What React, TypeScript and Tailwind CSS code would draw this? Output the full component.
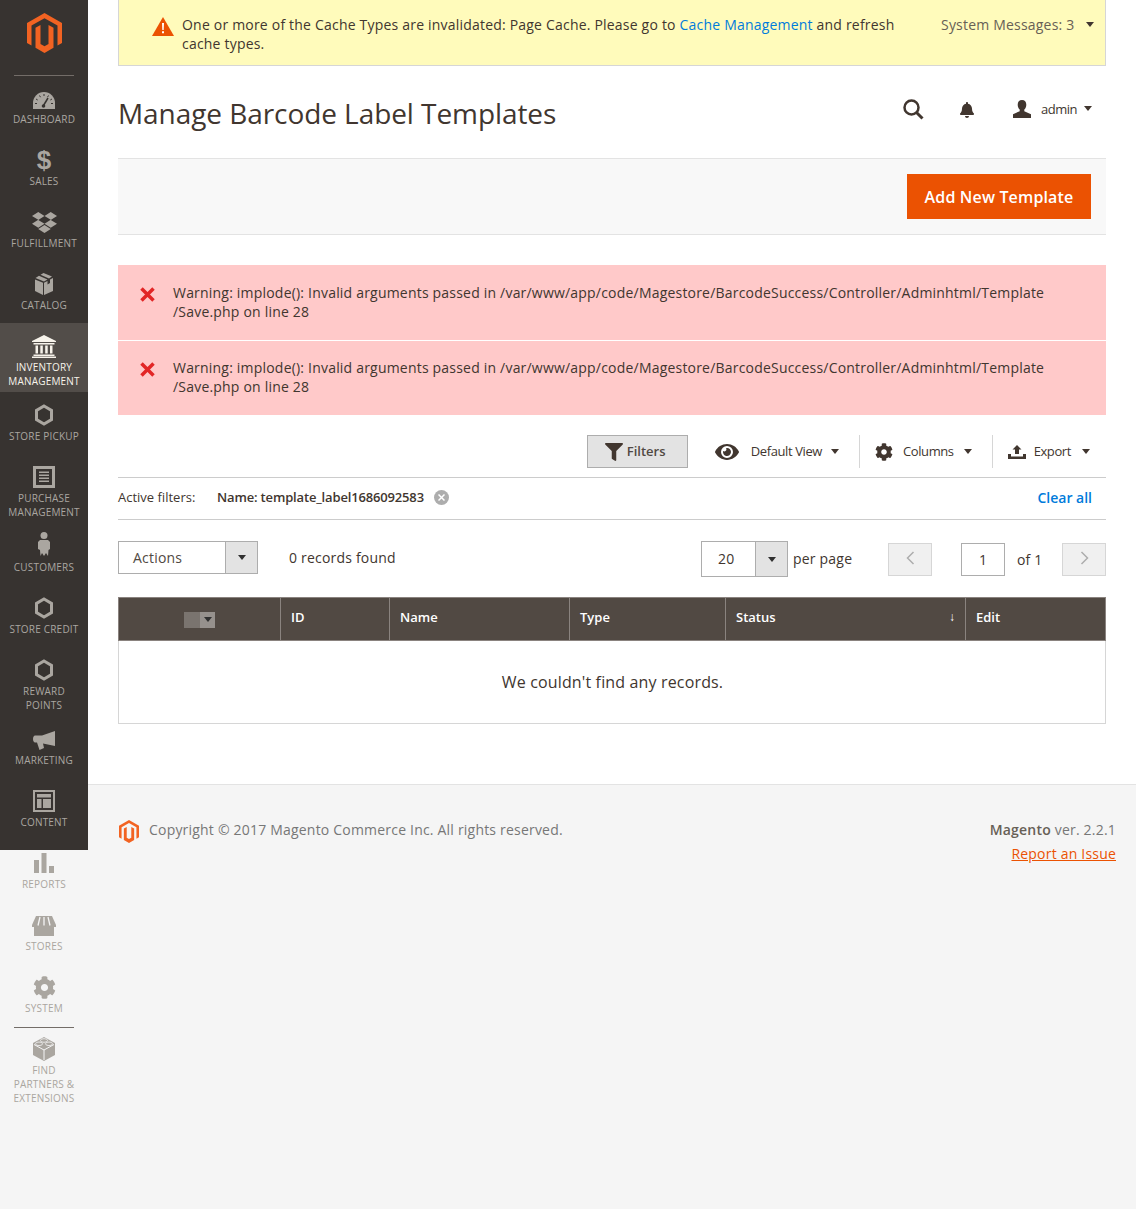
import React from 'react';
import { FaBell, FaCog, FaDropbox, FaEye, FaFilter } from 'react-icons/fa';

const Hexagon = () => (
  <svg width="20" height="22" viewBox="0 0 20 22" fill="none" stroke="currentColor" strokeWidth="3">
    <path d="M10 2l7.500 4.400v9.200L10 20l-7.500-4.400V6.400z" />
  </svg>
);

const MagentoLogo = ({ className }: { className: string }) => (
  <svg className={className} viewBox="0 0 35 40" fill="#f26322">
    <path d="M17.500 0L35 10v20l-4.500 2.600V12.600l-13-7.400-13 7.400v20L0 30V10z" />
    <path d="M13.500 12v19l4 2.300 4-2.300V12l5 2.800v20L17.500 40l-9-5.200v-20z" />
  </svg>
);

const Caret = ({ className = 'border-t-[#303030]' }: { className?: string }) => (
  <span className={`inline-block w-0 h-0 border-x-[4px] border-x-transparent border-t-[5px] ${className}`} />
);

const navIcons: Record<string, React.ReactNode> = {
  dashboard: (
    <svg width="22" height="17" viewBox="0 0 22 17" className="mt-[5px]">
      <path d="M0 17v-6a11 11 0 0122 0v6z" fill="currentColor" />
      <path
        d="M11 2v2M6.500 3.500l1 1.700M3 7l1.700 1M2 11.500h2M15.500 3.500l-1 1.700M19 7l-1.700 1M20 11.500h-2"
        stroke="#373330"
        strokeWidth="1"
      />
      <path d="M15 6l-4.500 7.500" stroke="#373330" strokeWidth="1.500" />
      <circle cx="10.500" cy="14" r="1.800" fill="#373330" />
    </svg>
  ),
  sales: <span className="text-[26px] leading-[24px] font-bold font-['Liberation_Sans',sans-serif]">$</span>,
  fulfillment: <FaDropbox size={25} />,
  catalog: (
    <svg width="20" height="22" viewBox="0 0 20 22" fill="currentColor">
      <path d="M9.500 0L18 3.500l-3 2-8.500-3.700zM5 2.800l8.500 3.800L10 8.500 1.500 5zM1 6.500l8 3.300V22l-8-4zM19 5v13l-9 4V9.800l3.500-1.800v3.500l2.500-1.500V6.500z" />
    </svg>
  ),
  inventory: (
    <svg width="24" height="23" viewBox="0 0 24 23" fill="currentColor">
      <path d="M12 0l12 6v1H0V6zM1.500 8h21v1.500h-21zM3.500 10.500h2.500v8H3.500zM8.300 10.500h2.500v8H8.300zM13.200 10.500h2.500v8h-2.500zM18 10.500h2.500v8H18zM1.500 19.500h21V21h-21zM0 21.500h24V23H0z" />
    </svg>
  ),
  pickup: <Hexagon />,
  purchase: (
    <svg width="22" height="22" viewBox="0 0 22 22" fill="currentColor">
      <path fillRule="evenodd" d="M0 0h22v22H0zM3 3v16h16V3z" />
      <path d="M6 5.500h10V7H6zM6 8.500h10V10H6zM6 11.500h10V13H6zM6 14.500h10V16H6z" />
    </svg>
  ),
  customers: (
    <svg width="12" height="24" viewBox="0 0 12 24" fill="currentColor" className="mb-[4px]">
      <circle cx="6" cy="3.500" r="3.500" />
      <path d="M2 8h8l2 2v7l-1.500 1-.5 6-2-3-2 3-2-3-1.500 3L2 18l-2-1v-7z" />
    </svg>
  ),
  credit: <Hexagon />,
  reward: <Hexagon />,
  marketing: (
    <svg width="22" height="19" viewBox="0 0 22 19" fill="currentColor" className="mt-[2px]">
      <path d="M22 0v15L10 12.500 11 17l-4.500 2L4 11.500H2c-1 0-2-1.500-2-3.500s1-3.500 2-3.500h7z" />
    </svg>
  ),
  content: (
    <svg width="22" height="22" viewBox="0 0 22 22" fill="currentColor">
      <path fillRule="evenodd" d="M0 0h22v22H0zM2 2v18h18V2z" />
      <path d="M4 4h14v3.500H4zM4 9h4.500v9H4zM10 9h8v9h-8z" />
    </svg>
  ),
  reports: (
    <svg width="20" height="22" viewBox="0 0 20 22" fill="currentColor" className="mt-[2px]">
      <path d="M0 7h5v13H0zM7.500 0h5v20h-5zM15 13h5v7h-5z" />
    </svg>
  ),
  stores: (
    <svg width="24" height="20" viewBox="0 0 24 20" className="mt-[2px]">
      <path d="M4 0h16l4 9v2H0V9z" fill="currentColor" />
      <path d="M2 11h20v9H2z" fill="currentColor" />
      <path d="M8 1L6 9.500M12 1v8.500M16 1l2 8.500" stroke="#f5f5f5" strokeWidth="1.300" fill="none" />
    </svg>
  ),
  system: <FaCog size={23} />,
  partners: (
    <svg width="22" height="24" viewBox="0 0 22 24">
      <path d="M11 0l11 6v12l-11 6L0 18V6z" fill="currentColor" />
      <path d="M1 7.500l10 5.500 10-5.500M11 13v10" stroke="#f5f5f5" strokeWidth="1" fill="none" />
      <ellipse cx="11" cy="3.500" rx="3.500" ry="1.800" fill="none" stroke="#f5f5f5" strokeWidth=".8" />
      <ellipse cx="6" cy="6.800" rx="3.500" ry="1.800" fill="none" stroke="#f5f5f5" strokeWidth=".8" />
      <ellipse cx="16" cy="6.800" rx="3.500" ry="1.800" fill="none" stroke="#f5f5f5" strokeWidth=".8" />
    </svg>
  ),
};

const NavItem = ({
  icon,
  lines,
  className = '',
}: {
  icon: string;
  lines: string[];
  className?: string;
}) => (
  <a className={`flex flex-col items-center text-center ${className}`}>
    <span className="flex h-[24px] mb-[2px] items-center justify-center">{navIcons[icon]}</span>
    {lines.map((line) => (
      <span key={line} className="text-[10px] leading-[14px] tracking-[0.2px] whitespace-nowrap">
        {line}
      </span>
    ))}
  </a>
);

const Sidebar = () => (
  <aside className="w-[88px] shrink-0">
    <div className="h-[850px] bg-[#373330] text-[#aaa6a0]">
      <div className="h-[76px] mx-[14px] border-b border-[#736d68] flex justify-center pt-[13px]">
        <MagentoLogo className="w-[35px] h-[40px]" />
      </div>
      <div className="-mt-px">
        <NavItem icon="dashboard" lines={['DASHBOARD']} className="h-[62px] pt-[11px]" />
        <NavItem icon="sales" lines={['SALES']} className="h-[62px] pt-[11px]" />
        <NavItem icon="fulfillment" lines={['FULFILLMENT']} className="h-[62px] pt-[11px]" />
        <NavItem icon="catalog" lines={['CATALOG']} className="h-[62px] pt-[11px]" />
        <NavItem
          icon="inventory"
          lines={['INVENTORY', 'MANAGEMENT']}
          className="h-[69px] pt-[11px] bg-[#524d49] text-[#f7f3eb]"
        />
        <NavItem icon="pickup" lines={['STORE PICKUP']} className="h-[62px] pt-[11px]" />
        <NavItem icon="purchase" lines={['PURCHASE', 'MANAGEMENT']} className="h-[69px] pt-[11px]" />
        <NavItem icon="customers" lines={['CUSTOMERS']} className="h-[62px] pt-[11px]" />
        <NavItem icon="credit" lines={['STORE CREDIT']} className="h-[62px] pt-[11px]" />
        <NavItem icon="reward" lines={['REWARD', 'POINTS']} className="h-[69px] pt-[11px]" />
        <NavItem icon="marketing" lines={['MARKETING']} className="h-[62px] pt-[11px]" />
        <NavItem icon="content" lines={['CONTENT']} className="h-[62px] pt-[11px]" />
      </div>
    </div>
    <div className="text-[#aaa6a0]">
      <NavItem icon="reports" lines={['REPORTS']} className="h-[52px] pt-px" />
      <NavItem icon="stores" lines={['STORES']} className="h-[62px] pt-[11px]" />
      <NavItem icon="system" lines={['SYSTEM']} className="h-[62px] pt-[11px]" />
      <div className="h-px mt-px mx-[14px] bg-[#736d68]" />
      <NavItem icon="partners" lines={['FIND', 'PARTNERS &', 'EXTENSIONS']} className="pt-[9px]" />
    </div>
  </aside>
);

const SystemMessage = () => (
  <div className="flex h-[66px] bg-[#fffbbb] border-x border-b border-[#d6d6d6] text-[14px] leading-[19px] tracking-[0.2px] text-[#41362f]">
    <div className="w-[63px] shrink-0 pl-[33px] pt-[17px]">
      <svg width="22" height="19" viewBox="0 0 22 19">
        <path d="M11 0l11 19H0z" fill="#eb5202" />
        <path d="M10 6h2l-.3 7h-1.400zM10 14.300h2v2h-2z" fill="#fff" />
      </svg>
    </div>
    <p className="w-[734px] pt-[15px]">
      One or more of the Cache Types are invalidated: Page Cache. Please go to{' '}
      <a className="text-[#007bdb]">Cache Management</a> and refresh cache types.
    </p>
    <div className="ml-[25px] pt-[15px] flex items-start gap-[12px] text-[#676056] whitespace-nowrap">
      System Messages: 3
      <Caret className="mt-[7px] border-t-[#41362f]" />
    </div>
  </div>
);

const PageHeader = () => (
  <div className="flex items-center justify-between h-[92px] pr-[14px] text-[#41362f]">
    <h1 className="text-[28px] leading-[36px] mt-[2px] tracking-[-0.07px]">Manage Barcode Label Templates</h1>
    <div className="flex items-center mb-[5px]">
      <svg width="21" height="21" viewBox="0 0 21 21" fill="none" stroke="currentColor">
        <circle cx="8.500" cy="8.500" r="7" strokeWidth="2.500" />
        <path d="M13.500 13.500l6 6" strokeWidth="3" />
      </svg>
      <FaBell size={16} className="ml-[35px]" />
      <svg width="18" height="18" viewBox="0 0 18 18" fill="currentColor" className="ml-[38px] mb-[2px]">
        <path d="M9 0c2.800 0 4.300 2 4.300 4.800 0 2-.8 3.800-2 4.800v1.600l6.700 3V18H0v-3.800l6.700-3V9.600c-1.200-1-2-2.800-2-4.800C4.700 2 6.200 0 9 0z" />
      </svg>
      <span className="ml-[10px] mb-[2px] text-[13px] leading-[18px] tracking-[-0.5px]">admin</span>
      <Caret className="ml-[7px] mb-[2px] border-t-[#41362f]" />
    </div>
  </div>
);

const Warning = ({ last = false }: { last?: boolean }) => (
  <div
    className={`flex bg-[#ffc9c9] text-[14px] leading-[19px] tracking-[0.2px] text-[#41362f] ${
      last ? 'h-[74px]' : 'h-[75px]'
    }`}
  >
    <div className={`w-[55px] shrink-0 pl-[22px] ${last ? 'pt-[21px]' : 'pt-[22px]'}`}>
      <svg width="15" height="15" viewBox="0 0 15 15" stroke="#e22626" strokeWidth="3.500">
        <path d="M1.500 1.500l12 12M13.500 1.500l-12 12" />
      </svg>
    </div>
    <p className={`w-[900px] ${last ? 'pt-[17px]' : 'pt-[18px]'}`}>
      Warning: implode(): Invalid arguments passed in /var/www/app/code/Magestore/BarcodeSuccess/Controller/Adminhtml/Template
      <br />
      /Save.php on line 28
    </p>
  </div>
);

const GridToolbar = () => (
  <div className="flex items-center justify-end h-[33px] mt-[20px] pr-[16px] text-[13px] text-[#41362f]">
    <button className="flex items-center gap-[4px] w-[101px] h-[33px] pl-[17px] bg-[#e3e3e3] border border-[#adadad] font-semibold text-[#514943]">
      <FaFilter size={18} className="text-[#41362f]" />
      Filters
    </button>
    <FaEye size={24} className="ml-[27px]" />
    <span className="ml-[12px] tracking-[-0.4px]">Default View</span>
    <Caret className="ml-[9px]" />
    <div className="w-px h-[33px] bg-[#d6d6d6] ml-[20px]" />
    <FaCog size={18} className="ml-[15px]" />
    <span className="ml-[10px] tracking-[-0.4px]">Columns</span>
    <Caret className="ml-[10px]" />
    <div className="w-px h-[33px] bg-[#d6d6d6] ml-[20px]" />
    <svg width="18" height="14" viewBox="0 0 18 14" fill="currentColor" className="ml-[15px]">
      <path d="M9 0l4.500 4.500H11V9H7V4.500H4.500zM0 9h3v2.500h12V9h3v5H0z" />
    </svg>
    <span className="ml-[8px] tracking-[-0.4px]">Export</span>
    <Caret className="ml-[11px]" />
  </div>
);

const ActiveFilters = () => (
  <div className="flex items-center h-[43px] mt-[9px] pr-[14px] pb-[2px] border-y border-[#cccccc] text-[13px] text-[#41362f]">
    <span className="w-[99px]">Active filters:</span>
    <span className="font-semibold tracking-[-0.16px]">Name: template_label1686092583</span>
    <span className="ml-[10px] flex items-center justify-center w-[15px] h-[15px] rounded-full bg-[#adadad]">
      <svg width="7" height="7" viewBox="0 0 7 7" stroke="#fff" strokeWidth="1.500">
        <path d="M.5.5l6 6M6.500.5l-6 6" />
      </svg>
    </span>
    <a className="ml-auto text-[14px] font-semibold text-[#007bdb]">Clear all</a>
  </div>
);

const SelectBox = ({
  label,
  width,
  height,
  labelClass,
}: {
  label: string;
  width: string;
  height: string;
  labelClass: string;
}) => (
  <div className={`flex border border-[#adadad] bg-white ${width} ${height}`}>
    <span className={`flex-1 flex items-center ${labelClass}`}>{label}</span>
    <span className="w-[32px] flex items-center justify-center bg-[#e3e3e3] border-l border-[#adadad]">
      <Caret />
    </span>
  </div>
);

const PageButton = ({ dir }: { dir: 'prev' | 'next' }) => (
  <span className="w-[44px] h-[33px] flex items-center justify-center bg-[#f0f0f0] border border-[#d6d6d6]">
    <svg width="9" height="14" viewBox="0 0 9 14" fill="none" stroke="#adadad" strokeWidth="1.500" className="mb-[3px]">
      <path d={dir === 'prev' ? 'M7.500 1L1.500 7l6 6' : 'M1.500 1l6 6-6 6'} />
    </svg>
  </span>
);

const Pager = () => (
  <div className="flex items-start h-[36px] mt-[21px] text-[14px] tracking-[0.2px] text-[#41362f]">
    <SelectBox label="Actions" width="w-[140px]" height="h-[33px]" labelClass="pl-[14px] text-[#514943]" />
    <span className="ml-[31px] h-[33px] flex items-center">0 records found</span>
    <div className="ml-auto flex items-center">
      <SelectBox label="20" width="w-[87px]" height="h-[36px]" labelClass="pl-[16px] pb-[2px]" />
      <span className="ml-[5px] w-[95px] mb-px">per page</span>
      <PageButton dir="prev" />
      <span className="ml-[29px] w-[44px] h-[33px] flex items-center justify-center border border-[#adadad]">1</span>
      <span className="ml-[12px] w-[45px]">of 1</span>
      <PageButton dir="next" />
    </div>
  </div>
);

const columns = [
  { name: 'ID', width: 'w-[109px]' },
  { name: 'Name', width: 'w-[180px]' },
  { name: 'Type', width: 'w-[156px]' },
  { name: 'Status', width: 'w-[240px]' },
  { name: 'Edit', width: 'w-[140px]' },
];

const RecordsTable = () => (
  <table className="w-full mt-[20px] table-fixed border-separate border-spacing-0 text-[13px]">
    <thead>
      <tr className="h-[44px] bg-[#514943] text-white">
        <th className="w-[163px] border-y border-x border-[#8a837f] font-normal">
          <span className="inline-flex align-middle w-[31px] h-[16px]">
            <span className="w-[16px] bg-[#7a746f]" />
            <span className="w-[15px] flex items-center justify-center bg-[#96918d]">
              <Caret />
            </span>
          </span>
        </th>
        {columns.map((col) => (
          <th
            key={col.name}
            className={`${col.width} relative border-y border-r border-[#8a837f] pl-[10px] pb-[3px] text-left font-semibold`}
          >
            {col.name}
            {col.name === 'Status' && (
              <span className="absolute right-[10px] top-[10px] text-[12px] font-normal">↓</span>
            )}
          </th>
        ))}
      </tr>
    </thead>
    <tbody>
      <tr className="h-[83px]">
        <td
          colSpan={6}
          className="border-x border-b border-[#d6d6d6] pl-px text-center text-[16px] tracking-[0.15px] text-[#41362f]"
        >
          We couldn't find any records.
        </td>
      </tr>
    </tbody>
  </table>
);

const Footer = () => (
  <footer className="flex justify-between h-[425px] pl-[31px] pr-[20px] pt-[35px] bg-[#f5f5f5] border-t border-[#e3e3e3] text-[14px] leading-[20px] tracking-[0.2px] text-[#777777]">
    <div className="flex items-start">
      <MagentoLogo className="w-[20px] h-[23px]" />
      <span className="ml-[10px]">Copyright © 2017 Magento Commerce Inc. All rights reserved.</span>
    </div>
    <div className="text-right">
      <p>
        <b className="font-semibold text-[#676056]">Magento</b> ver. 2.2.1
      </p>
      <a className="block mt-[4px] underline text-[#eb5202]">Report an Issue</a>
    </div>
  </footer>
);

export default function App() {
  return (
    <div className="flex min-h-[1209px] bg-[#f5f5f5] font-['Open_Sans',sans-serif]">
      <Sidebar />
      <div className="flex-1 min-w-0">
        <main className="h-[784px] px-[30px] bg-white">
          <SystemMessage />
          <PageHeader />
          <div className="flex justify-end h-[77px] py-[15px] pr-[15px] bg-[#f8f8f8] border-y border-[#e3e3e3]">
            <button className="w-[184px] h-[45px] bg-[#eb5202] text-white text-[16px] font-semibold tracking-[0.15px]">
              Add New Template
            </button>
          </div>
          <div className="mt-[30px] flex flex-col gap-px">
            <Warning />
            <Warning last />
          </div>
          <GridToolbar />
          <ActiveFilters />
          <Pager />
          <RecordsTable />
        </main>
        <Footer />
      </div>
    </div>
  );
}
